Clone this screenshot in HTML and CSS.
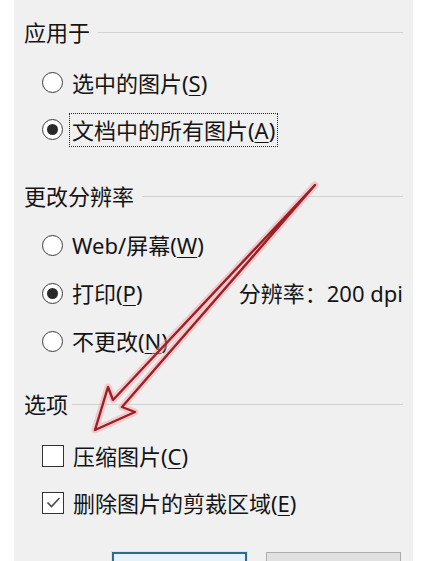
FILE: index.html
```html
<!DOCTYPE html>
<html lang="zh-CN">
<head>
<meta charset="utf-8">
<title>压缩图片</title>
<link rel="stylesheet" href="styles.css">
</head>
<body>
<div class="dialog">
  <section class="group g1">
    <div class="group-title"><span>应用于</span><i class="rule"></i></div>
    <div class="opts">
      <div class="opt"><span class="radio"></span><span class="lbl">选中的图片(<u>S</u>)</span></div>
      <div class="opt"><span class="radio on"></span><span class="lbl focus">文档中的所有图片(<u>A</u>)</span></div>
    </div>
  </section>

  <section class="group g2">
    <div class="group-title"><span>更改分辨率</span><i class="rule"></i></div>
    <div class="opts">
      <div class="opt"><span class="radio"></span><span class="lbl">Web/屏幕(<u>W</u>)</span></div>
      <div class="opt">
        <div class="opt-main"><span class="radio on"></span><span class="lbl">打印(<u>P</u>)</span></div>
        <span class="res">分辨率：200 dpi</span>
      </div>
      <div class="opt"><span class="radio"></span><span class="lbl">不更改(<u>N</u>)</span></div>
    </div>
  </section>

  <section class="group g3">
    <div class="group-title"><span>选项</span><i class="rule"></i></div>
    <div class="opts">
      <div class="opt"><span class="check"></span><span class="lbl">压缩图片(<u>C</u>)</span></div>
      <div class="opt"><span class="check on"><svg viewBox="0 0 19 19" width="19" height="19"><path d="M3.5 9.5 L7.5 13.5 L15.5 5" fill="none" stroke="#4a4a4a" stroke-width="1.6"/></svg></span><span class="lbl">删除图片的剪裁区域(<u>E</u>)</span></div>
    </div>
  </section>

  <div class="buttons">
    <button class="btn default" aria-label="确定"></button>
    <button class="btn plain" aria-label="取消"></button>
  </div>
</div>

<svg class="arrow" width="424" height="561" viewBox="0 0 424 561">
  <path d="M113 400 L108 387 L95 430 L135 412 L122 407 L315 185 Z" fill="none" stroke="#f3a3a6" stroke-width="7" stroke-linejoin="round" opacity="0.5"/>
  <path d="M113 400 L108 387 L95 430 L135 412 L122 407 L315 185 Z" fill="none" stroke="#9c1f27" stroke-width="2.4" stroke-linejoin="round"/>
</svg>
</body>
</html>
```

FILE: styles.css
```css
* { box-sizing: border-box; }

html, body {
  margin: 0;
  height: 100%;
  overflow: hidden;
  background: #ffffff;
}

body {
  position: relative;
  font-family: "Noto Sans", "Noto Sans CJK SC", sans-serif;
  font-size: 22px;
  color: #141414;
}

.dialog {
  margin-left: 14px;
  width: 399px;
  height: 561px;
  background: #f0f0f0;
  padding: 17px 10px 0;
  display: flex;
  flex-direction: column;
}

.group-title {
  display: flex;
  align-items: center;
  gap: 8px;
  height: 30px;
  line-height: 30px;
}

.g3 .group-title { gap: 4px; }

.rule {
  flex: 1;
  height: 1px;
  background: #d2d2d2;
  margin-top: 1px;
}

.opts {
  display: flex;
  flex-direction: column;
  padding-left: 18px;
}

.opt {
  display: flex;
  align-items: center;
  gap: 9px;
  height: 47px;
  line-height: 30px;
}

.g1 .opts { margin-top: 12px; }
.g2 { margin-top: 28px; }
.g2 .opts { margin-top: 10px; }
.g2 .opt { height: 48px; }
.g3 { margin-top: 24px; }
.g3 .opts { margin-top: 13px; }

.opt-main {
  display: flex;
  align-items: center;
  gap: 9px;
  width: 193px;
}

.radio {
  flex: none;
  position: relative;
  width: 21px;
  height: 21px;
  border-radius: 50%;
  border: 1.5px solid #3c3c3c;
  background: #ffffff;
}

.radio.on::after {
  content: "";
  position: absolute;
  inset: 4px;
  border-radius: 50%;
  background: #2a2a2a;
}

.check {
  flex: none;
  display: flex;
  align-items: center;
  justify-content: center;
  width: 22px;
  height: 22px;
  border: 1.5px solid #333333;
  background: #ffffff;
}

.lbl { white-space: nowrap; }

.focus {
  margin-left: -3px;
  padding: 0 2px;
  height: 34px;
  line-height: 32px;
  border: 1px dotted #222222;
}

u {
  text-decoration-thickness: 1px;
  text-underline-offset: 3px;
}

.res { white-space: nowrap; }

.buttons {
  margin-top: 26px;
  display: flex;
  justify-content: flex-end;
  gap: 19px;
  padding-right: 2px;
}

.btn {
  width: 135px;
  height: 30px;
  padding: 0;
}

.btn.default {
  border: 2px solid #2b6c93;
  background: #e5f1fb;
  box-shadow: 0 0 0 1px #cfe6f5;
}

.btn.plain {
  border: 1px solid #adadad;
  background: #e1e1e1;
}

.arrow {
  position: absolute;
  left: 0;
  top: 0;
  pointer-events: none;
}
```
